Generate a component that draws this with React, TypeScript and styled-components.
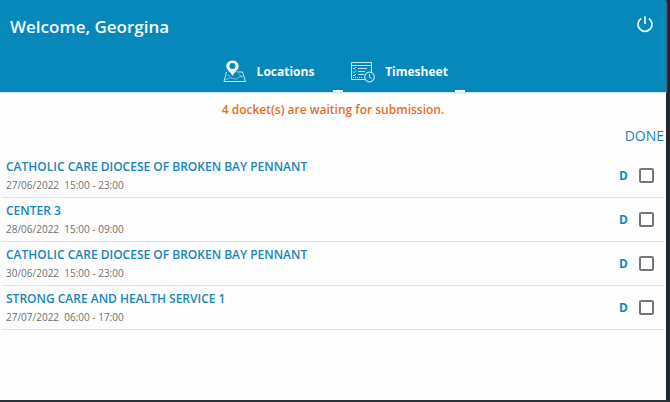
import React, { useState } from "react";
import styled, { createGlobalStyle } from "styled-components";

const blue = "#0788bb";
const linkBlue = "#1786b5";

const GlobalStyle = createGlobalStyle`
  *, *::before, *::after { box-sizing: border-box; }
  body {
    margin: 0;
    background: #fdfdfd;
    font-family: "Open Sans", "Noto Sans", sans-serif;
  }
  button { font-family: inherit; }
`;

const Screen = styled.div`
  display: flex;
  flex-direction: column;
  min-height: 100vh;
  border-right: 4px solid #1f272d;
  border-bottom: 2px solid #2b3238;
  background: #fdfdfd;
`;

const Header = styled.header`
  display: flex;
  flex-direction: column;
  background: ${blue};
  box-shadow: 0 1px 2px #c5dce6;
  color: #f4fbfe;
`;

const TitleBar = styled.div`
  display: flex;
  align-items: center;
  justify-content: space-between;
  height: 52px;
  padding: 2px 10px 0;
`;

const Greeting = styled.h1`
  margin: 0;
  font-size: 17px;
  line-height: 24px;
  font-weight: 600;
`;

const PowerButton = styled.button`
  display: flex;
  padding: 0 2px 6px;
  border: 0;
  background: none;
  color: #e3f5fc;
  cursor: pointer;
`;

const Tabs = styled.nav`
  display: flex;
  justify-content: center;
  height: 40px;
  padding-left: 2px;
`;

const Tab = styled.button<{ $width: number }>`
  display: flex;
  align-items: center;
  justify-content: center;
  gap: 10px;
  width: ${(p) => p.$width}px;
  padding: 0;
  border: 0;
  background: none;
  color: inherit;
  font-size: 12px;
  line-height: 18px;
  font-weight: 700;
  cursor: pointer;
`;

const TabMarker = styled.span`
  align-self: flex-end;
  width: 10px;
  height: 2px;
  background: #fdfdfd;
`;

const Notice = styled.p`
  margin: 9px 0 0;
  color: #e86e28;
  font-size: 12px;
  line-height: 18px;
  font-weight: 600;
  text-align: center;
`;

const ColumnLabel = styled.div`
  margin-top: 7px;
  padding: 0 2px 8px;
  color: ${linkBlue};
  font-size: 14px;
  line-height: 20px;
  text-align: right;
`;

const DocketList = styled.ul`
  margin: 0;
  padding: 0 2px;
  list-style: none;
`;

const DocketRow = styled.li`
  display: flex;
  align-items: center;
  justify-content: space-between;
  height: 44px;
  padding: 0 10px 0 4px;
  border-bottom: 1px solid #dfe1e3;
`;

const DocketLabel = styled.label`
  display: flex;
  flex-direction: column;
  gap: 1px;
`;

const DocketName = styled.span`
  color: ${linkBlue};
  font-size: 12px;
  line-height: 18px;
  font-weight: 600;
`;

const DocketTime = styled.span`
  color: #707070;
  font-size: 10px;
  line-height: 16px;
  white-space: pre;
`;

const DocketActions = styled.div`
  display: flex;
  align-items: center;
  gap: 11px;
`;

const DocketLink = styled.a`
  color: ${linkBlue};
  font-size: 12px;
  line-height: 16px;
  font-weight: 700;
  text-decoration: none;
`;

const Checkbox = styled.input`
  appearance: none;
  width: 15px;
  height: 15px;
  margin: 0;
  border: 2px solid #777777;
  border-radius: 2px;
  background: #ffffff;
  cursor: pointer;

  &:checked {
    background: ${blue};
    box-shadow: inset 0 0 0 2px #ffffff;
  }
`;

const PowerIcon = () => (
  <svg width="18" height="18" viewBox="0 0 18 18" fill="none" stroke="currentColor" strokeWidth="1.8" aria-hidden="true">
    <path d="M9 1.2V9" />
    <path d="M5.2 3.4a7 7 0 1 0 7.6 0" />
  </svg>
);

const MapIcon = () => (
  <svg width="25" height="24" viewBox="0 0 25 24" fill="none" stroke="currentColor" aria-hidden="true">
    <path d="M5 12H4.500L2 21.500H23.500L20.500 12H15" strokeWidth="1" opacity=".8" />
    <path d="M3 20c3-1 4-3 7-2s4 2 6 0 2-2 5-1M17 14l3 3M5 15l3 1" strokeWidth=".8" opacity=".6" />
    <path
      d="M10.500 .5c-3.600 0-6.200 2.600-6.200 5.800 0 3.600 3.900 5.300 6.200 9.700 2.300-4.400 6.200-6.100 6.200-9.700 0-3.200-2.600-5.800-6.200-5.800Z"
      fill="currentColor"
      stroke="none"
    />
    <circle cx="10.500" cy="6" r="3" fill={blue} stroke="none" />
  </svg>
);

const TimesheetIcon = () => (
  <svg width="25" height="22" viewBox="0 0 25 22" fill="none" stroke="currentColor" strokeWidth="1" opacity=".8" aria-hidden="true">
    <path d="M15 18.500H1.500V1.500H21.500V12M1.500 4.500h20" />
    <path d="m3 7 1 1 2-2M3 10.500l1 1 2-2M3 14l1 1 2-2M8 7.500h9M8 10.500h7M8 13.500h6" />
    <path d="M3 16.500h10" strokeDasharray="1 1" />
    <circle cx="19.500" cy="16" r="4.800" fill={blue} strokeWidth="1.200" />
    <path d="M19.500 13v3.200l2.200 1.200" />
  </svg>
);

const dockets = [
  { id: 1, name: "CATHOLIC CARE DIOCESE OF BROKEN BAY PENNANT", date: "27/06/2022", time: "15:00 - 23:00" },
  { id: 2, name: "CENTER 3", date: "28/06/2022", time: "15:00 - 09:00" },
  { id: 3, name: "CATHOLIC CARE DIOCESE OF BROKEN BAY PENNANT", date: "30/06/2022", time: "15:00 - 23:00" },
  { id: 4, name: "STRONG CARE AND HEALTH SERVICE 1", date: "27/07/2022", time: "06:00 - 17:00" },
];

export default function App() {
  const [done, setDone] = useState<number[]>([]);
  const toggle = (id: number) =>
    setDone((ids) => (ids.includes(id) ? ids.filter((i) => i !== id) : [...ids, id]));

  return (
    <>
      <GlobalStyle />
      <Screen>
        <Header>
          <TitleBar>
            <Greeting>Welcome, Georgina</Greeting>
            <PowerButton type="button" aria-label="Log out">
              <PowerIcon />
            </PowerButton>
          </TitleBar>
          <Tabs>
            <Tab type="button" $width={130}>
              <MapIcon />
              Locations
            </Tab>
            <TabMarker />
            <Tab type="button" $width={112} aria-current="page">
              <TimesheetIcon />
              Timesheet
            </Tab>
            <TabMarker />
          </Tabs>
        </Header>
        <main>
          <Notice>4 docket(s) are waiting for submission.</Notice>
          <ColumnLabel>DONE</ColumnLabel>
          <DocketList>
            {dockets.map((d) => (
              <DocketRow key={d.id}>
                <DocketLabel htmlFor={`docket-${d.id}`}>
                  <DocketName>{d.name}</DocketName>
                  <DocketTime>{`${d.date}  ${d.time}`}</DocketTime>
                </DocketLabel>
                <DocketActions>
                  <DocketLink href={`#docket-${d.id}`}>D</DocketLink>
                  <Checkbox
                    id={`docket-${d.id}`}
                    type="checkbox"
                    checked={done.includes(d.id)}
                    onChange={() => toggle(d.id)}
                  />
                </DocketActions>
              </DocketRow>
            ))}
          </DocketList>
        </main>
      </Screen>
    </>
  );
}
